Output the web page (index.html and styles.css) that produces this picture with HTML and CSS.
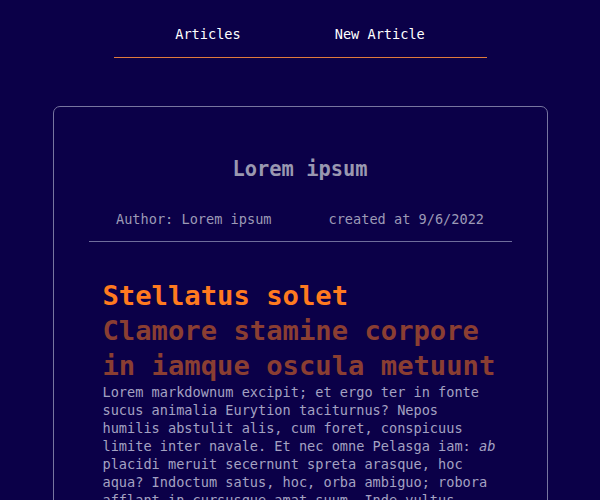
FILE: index.html
```html
<!DOCTYPE html>
<html lang="en">
<head>
<meta charset="utf-8">
<title>Lorem ipsum</title>
<link rel="stylesheet" href="styles.css">
</head>
<body>
<nav class="nav">
  <a class="nav-link" href="#">Articles</a>
  <a class="nav-link" href="#">New Article</a>
</nav>
<main class="card">
  <header class="card-head">
    <h1 class="title">Lorem ipsum</h1>
    <div class="meta">
      <span>Author: Lorem ipsum</span>
      <span>created at 9/6/2022</span>
    </div>
  </header>
  <article class="content">
    <h2 class="h1">Stellatus solet</h2>
    <h3 class="h2">Clamore stamine corpore in iamque oscula metuunt</h3>
    <p class="text">Lorem markdownum excipit; et ergo ter in fonte sucus animalia Eurytion taciturnus? Nepos humilis abstulit alis, cum foret, conspicuus limite inter navale. Et nec omne Pelasga iam: <em>ab</em> placidi meruit secernunt spreta arasque, hoc aqua? Indoctum satus, hoc, orba ambiguo; robora afflant in cursusque amat suum. Inde vultus tenebat dolor, nec ille tamen videt.</p>
  </article>
</main>
</body>
</html>
```

FILE: styles.css
```css
* { box-sizing: border-box; }

html, body {
  margin: 0;
  padding: 0;
  background: #0b0048;
}

body {
  font-family: "DejaVu Sans Mono", "Liberation Mono", monospace;
  font-size: 13.6px;
  line-height: 18px;
  color: #a4a2c2;
}

.nav {
  width: 373px;
  margin: 0 auto;
  display: flex;
  justify-content: center;
  gap: 94px;
  padding: 24px 0 13px;
  line-height: 20px;
  border-bottom: 1px solid #e07b3c;
}

.nav-link {
  color: #ffffff;
  text-decoration: none;
}

.card {
  width: 495px;
  margin: 48px auto 40px;
  border: 1px solid #77759f;
  border-radius: 7px;
  padding: 50px 35px 30px;
}

.card-head {
  border-bottom: 1px solid #6f6d9c;
  padding-bottom: 13px;
}

.title {
  margin: 0;
  text-align: center;
  font-size: 20.4px;
  line-height: 24px;
  font-weight: bold;
  color: #9a98b0;
}

.meta {
  margin-top: 29px;
  display: flex;
  justify-content: center;
  gap: 57px;
  color: #9c9ab6;
}

.content {
  padding: 36px 14px 0;
}

.h1, .h2 {
  margin: 0;
  font-size: 27.2px;
  line-height: 35px;
  font-weight: bold;
}

.h1 { color: #ff7a1f; }
.h2 { color: #8a3e32; }

.text {
  margin: 0;
}

.text em {
  font-style: italic;
}
```
